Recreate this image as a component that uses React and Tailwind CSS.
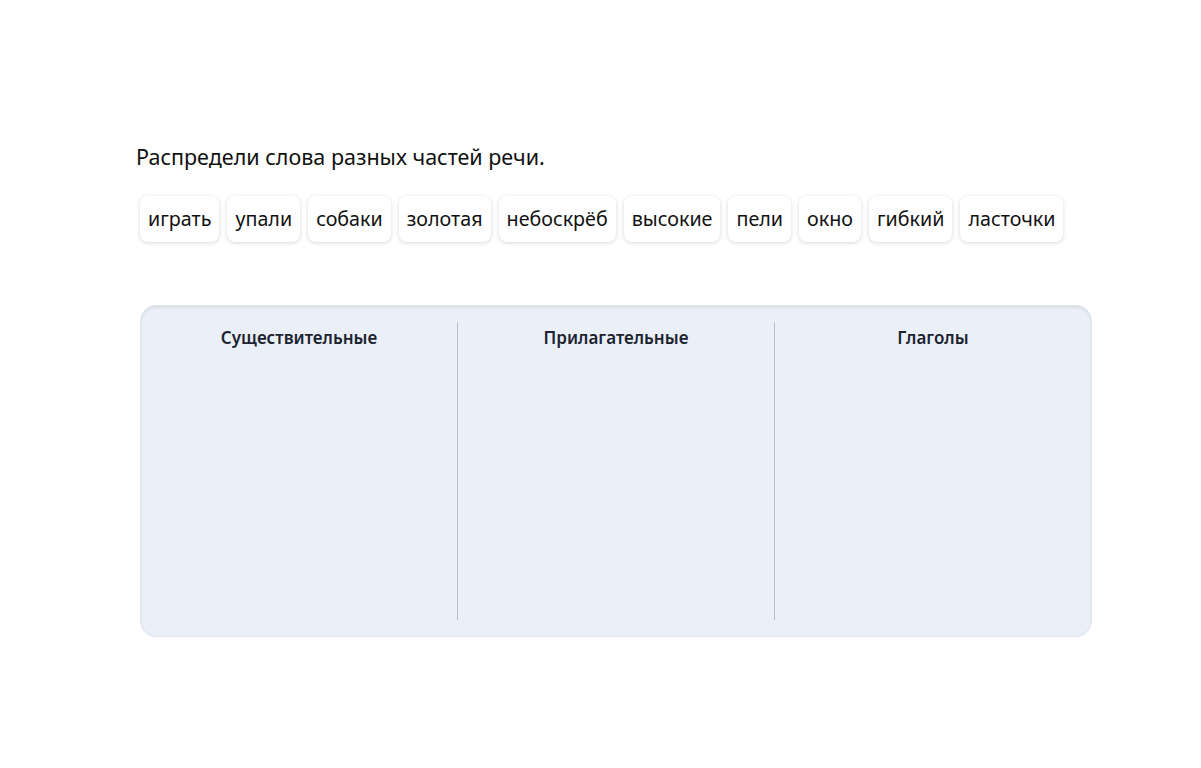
import React from "react";

const words = [
  "играть",
  "упали",
  "собаки",
  "золотая",
  "небоскрёб",
  "высокие",
  "пели",
  "окно",
  "гибкий",
  "ласточки",
];

const columns = ["Существительные", "Прилагательные", "Глаголы"];

export default function App() {
  return (
    <div className="min-h-screen w-full bg-white font-['Noto_Sans',sans-serif] text-black">
      <div className="pl-[136px] pr-[109px] pt-[141px]">
        {/* Task title */}
        <h1 className="text-[21.5px] leading-[32px] font-normal text-[#111]">
          Распредели слова разных частей речи.
        </h1>

        {/* Word chips */}
        <div className="mt-[23px] ml-[4px] flex flex-wrap gap-2">
          {words.map((w) => (
            <div
              key={w}
              className="h-[46px] px-2 flex items-center rounded-lg bg-white text-[19.7px] text-[#111] shadow-[0_1px_4px_rgba(0,0,0,0.16)]"
            >
              {w}
            </div>
          ))}
        </div>

        {/* Drop zones */}
        <div className="mt-[63px] ml-[4px] h-[332px] rounded-2xl border border-[#dfe3ec] bg-[#ebeff7] shadow-[inset_0_2px_3px_rgba(0,0,0,0.08)] flex py-4">
          {columns.map((c, i) => (
            <div
              key={c}
              className={
                "flex-1 flex justify-center " +
                (i < columns.length - 1 ? "border-r border-[#b9bfcc]" : "")
              }
            >
              <span className="text-[17px] font-semibold text-[#1c2431] leading-[32px]">
                {c}
              </span>
            </div>
          ))}
        </div>
      </div>
    </div>
  );
}
